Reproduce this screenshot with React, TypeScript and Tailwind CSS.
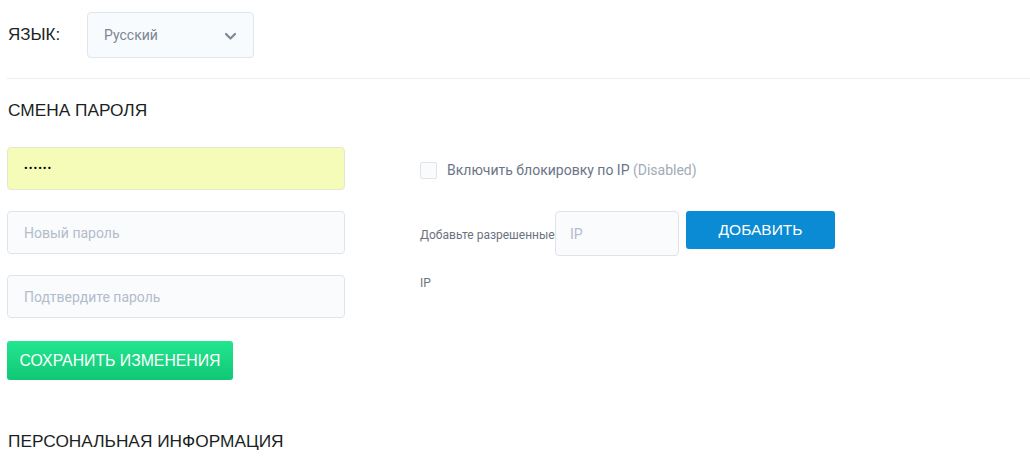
import { useState } from "react"

const inputCls =
  "w-full h-[43px] rounded-[4px] border border-[#dfe4eb] bg-[#f9fbfd] px-4 text-[14px] text-[#4a5160] placeholder:text-[#b4bccb] outline-none"

const App = () => {
  const [ipLock, setIpLock] = useState<boolean>(false)

  return (
    <div className="min-h-[472px] bg-white pl-[7px] font-['Roboto',sans-serif] text-[#1b1f24]">
      {/* язык */}
      <div className="flex items-center pt-3">
        <span className="w-[80px] pl-px font-['Liberation_Sans',sans-serif] text-[17px]">ЯЗЫК:</span>
        <div className="flex h-[46px] w-[167px] items-center justify-between rounded-[4px] border border-[#e1e6ed] bg-[#f8fbfd] pl-4 pr-4">
          <span className="text-[14px] text-[#7c8594]">Русский</span>
          <svg width="13" height="9" viewBox="0 0 13 9" className="mt-[3px]">
            <path d="M2 2 L6.5 6.5 L11 2" fill="none" stroke="#7f8896" strokeWidth="2.2" strokeLinecap="round" strokeLinejoin="round" />
          </svg>
        </div>
      </div>

      <div className="mt-[20px] border-t border-[#eceef1]" />

      <h2 className="mt-[19px] pl-px font-['Liberation_Sans',sans-serif] text-[17.3px] leading-6 font-normal">СМЕНА ПАРОЛЯ</h2>

      <div className="mt-[25px] flex gap-[75px]">
        {/* пароль */}
        <div className="flex w-[338px] flex-col">
          <div className="flex flex-col gap-[21px]">
            <input
              type="password"
              readOnly
              value="123456"
              className="w-full h-[43px] rounded-[4px] border border-[#e3e8d0] bg-[#f4fcb8] px-4 text-[11px] tracking-[1px] text-black outline-none"
            />
            <input className={inputCls} placeholder="Новый пароль" />
            <input className={inputCls} placeholder="Подтвердите пароль" />
          </div>
          <button className="mt-[23px] h-[39px] w-[226px] rounded-[3px] bg-gradient-to-b from-[#22e68f] to-[#10c775] font-['Liberation_Sans',sans-serif] text-[15.8px] text-white">
            СОХРАНИТЬ ИЗМЕНЕНИЯ
          </button>
        </div>

        {/* ip */}
        <div className="flex flex-col">
          <label className="flex h-[45px] cursor-pointer items-center gap-[10px] pt-px">
            <span
              onClick={() => setIpLock(!ipLock)}
              className={`block h-[17px] w-[17px] rounded-[2px] border border-[#dfe4eb] ${ipLock ? "bg-[#0b8bd3]" : "bg-[#f9fbfd]"}`}
            />
            <span className="text-[14px] text-[#6b7487]">
              Включить блокировку по IP <span className="text-[#a3abb8]">(Disabled)</span>
            </span>
          </label>

          <div className="mt-[19px] flex items-start">
            <span className="w-[135px] whitespace-nowrap text-[12px] leading-[48px] text-[#6b7280]">
              Добавьте разрешенные
              <br />
              IP
            </span>
            <input
              className="h-[45px] w-[124px] rounded-[4px] border border-[#dfe4eb] bg-[#f9fbfd] px-[14px] text-[14px] placeholder:text-[#b4bccb] outline-none"
              placeholder="IP"
            />
            <button className="ml-[7px] h-[38px] w-[149px] rounded-[3px] bg-[#0b8bd3] font-['Liberation_Sans',sans-serif] text-[15.5px] text-white">
              ДОБАВИТЬ
            </button>
          </div>
        </div>
      </div>

      <h2 className="mt-[49px] pl-px font-['Liberation_Sans',sans-serif] text-[17.3px] leading-6 font-normal">ПЕРСОНАЛЬНАЯ ИНФОРМАЦИЯ</h2>
    </div>
  )
}

export default App
